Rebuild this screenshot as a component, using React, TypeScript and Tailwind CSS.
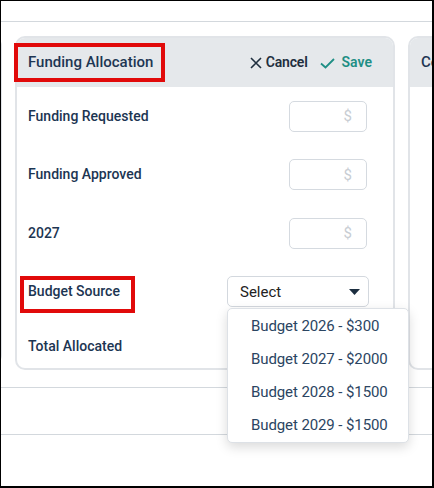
import React from "react";

function Row({ label, children, extra }: { label: string; children?: React.ReactNode; extra?: React.ReactNode }) {
  return (
    <div className="relative h-[58.5px] flex items-center justify-between pl-[11px] pr-[26px]">
      <span className="text-[14px] font-medium text-[#1c3552]">{label}</span>
      {children}
      {extra}
    </div>
  );
}

function Money() {
  return (
    <div className="w-[78px] h-[31px] border border-[#d5dae0] rounded-[5px] flex items-center justify-end pr-[14px] text-[15px] text-[#c8cdd3]">
      $
    </div>
  );
}

function SideCard({ title }: { title?: string }) {
  return (
    <div className="shrink-0 w-[100px] h-[334px] border-2 border-[#e1e4e8] rounded-[10px] overflow-hidden bg-white">
      <div className="h-[49px] bg-[#e5e8eb] flex items-center pl-[11px]">
        {title && <span className="text-[15px] font-medium text-[#1d3653]">{title}</span>}
      </div>
    </div>
  );
}

export default function App() {
  const options = ["Budget 2026 - $300", "Budget 2027 - $2000", "Budget 2028 - $1500", "Budget 2029 - $1500"];
  return (
    <div className="relative w-[434px] h-[488px] bg-white border-black border-l border-t border-r-2 border-b-2 overflow-hidden font-['Roboto',sans-serif]">
      <div className="h-[21px] border-b border-[#d3d8dd]" />
      <div className="pt-[14px] flex gap-[13px] ml-[-99px]">
        <div className="shrink-0 w-[100px] h-[329px] border-2 border-[#e1e4e8] rounded-[10px] bg-white" />
        <div className="relative shrink-0 w-[380px] h-[334px] border-2 border-[#e1e4e8] rounded-[10px] bg-white">
          <div className="relative h-[49px] bg-[#e5e8eb] rounded-t-[8px] flex items-center justify-between pl-[11px] pr-[21px]">
            <span className="text-[15px] font-medium text-[#1d3653]">Funding Allocation</span>
            <div className="flex items-center">
              <svg width="12" height="12" viewBox="0 0 12 12" className="mr-[4px]">
                <path d="M1 1 L11 11 M11 1 L1 11" stroke="#1f2f3f" strokeWidth="1.6" fill="none" />
              </svg>
              <span className="text-[14px] font-semibold text-[#1f2f3f] tracking-[-0.2px]">Cancel</span>
              <svg width="15" height="12" viewBox="0 0 15 12" className="ml-[12px] mr-[7px]">
                <path d="M1 6.5 L5.5 10.5 L14 2" stroke="#1f8f85" strokeWidth="1.8" fill="none" />
              </svg>
              <span className="text-[14px] font-semibold text-[#1f8f85]">Save</span>
            </div>
            <div className="absolute left-[-3px] top-[5px] w-[151px] h-[39px] border-4 border-[#e10a0a]" />
          </div>
          <Row label="Funding Requested"><Money /></Row>
          <Row label="Funding Approved"><Money /></Row>
          <Row label="2027"><Money /></Row>
          <Row
            label="Budget Source"
            extra={<div className="absolute left-[3px] top-[13px] w-[115px] h-[37px] border-4 border-[#e10a0a]" />}
          >
            <div className="relative mr-[-2px] z-10">
              <div className="w-[142px] h-[31px] border border-[#d3d8de] rounded-[5px] bg-white pl-[12px] pr-[8px] flex items-center justify-between">
                <span className="text-[15px] text-[#222]">Select</span>
                <svg width="11" height="6" viewBox="0 0 11 6">
                  <path d="M0 0 H11 L5.5 6 Z" fill="#1c2e40" />
                </svg>
              </div>
              <div className="absolute left-0 top-[32px] w-[182px] bg-white border border-[#dde1e6] rounded-[5px] shadow-[0_4px_12px_rgba(0,0,0,0.15)]">
                {options.map((o) => (
                  <div key={o} className="h-[33.25px] pl-[23px] flex items-center text-[15px] tracking-[-0.1px] text-[#2b4562]">
                    {o}
                  </div>
                ))}
              </div>
            </div>
          </Row>
          <div className="h-[47px] flex items-center pl-[11px] pt-[4px]">
            <span className="text-[14px] font-medium text-[#1c3552]">Total Allocated</span>
          </div>
        </div>
        <SideCard title="Co" />
      </div>
      <div className="mt-[17px] h-[47px] border-t border-[#d3d8dd]" />
      <div className="border-t border-[#d3d8dd]" />
    </div>
  );
}
